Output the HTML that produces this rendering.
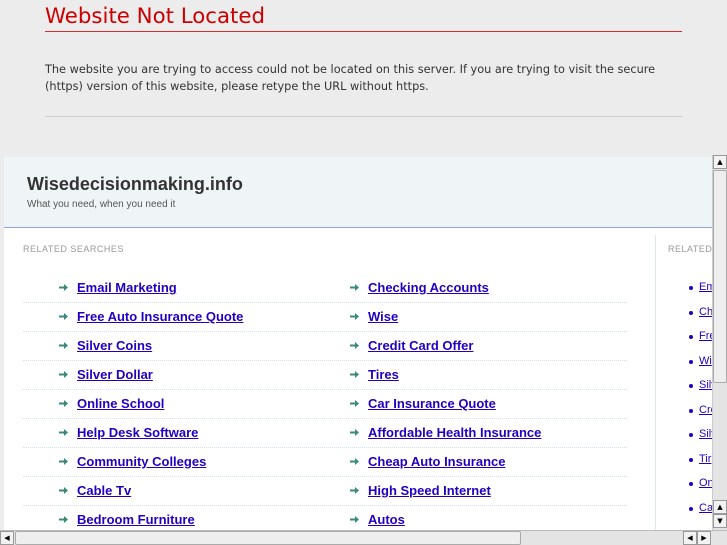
<!DOCTYPE html>
<html><head><meta charset="utf-8"><style>
*{margin:0;padding:0;box-sizing:border-box}
body{width:727px;height:545px;overflow:hidden;background:#ececec;position:relative;font-family:"DejaVu Sans",sans-serif}
.h1{position:absolute;left:45px;top:4px;font-size:21.3px;color:#c00;font-weight:normal}
.rl{position:absolute;left:45px;top:31px;width:637px;height:1px;background:#d03030}
.p{position:absolute;left:45px;top:61px;font-size:11.3px;line-height:17px;color:#333;width:640px}
.gl{position:absolute;left:45px;top:116px;width:637px;height:1px;background:#ccc}
.frame{position:absolute;left:4px;top:157px;width:708px;height:373px;background:#fff;overflow:hidden;font-family:"Liberation Sans",sans-serif}
.hd{position:absolute;left:0;top:0;width:708px;height:71px;background:#eff5f7;border-bottom:1px solid #8ea6d8}
.t{position:absolute;left:23px;top:17px;font-size:18px;font-weight:bold;color:#333}
.st{position:absolute;left:23px;top:42px;font-size:10px;color:#555}
.rs{position:absolute;top:87px;font-size:9px;color:#999;letter-spacing:.5px}
.row{position:absolute;font-size:13px;font-weight:bold;color:#2200c1;text-decoration:underline}
.ar{position:absolute;width:9px;height:7px}
.ar svg{display:block}
.dl{position:absolute;left:19px;width:604px;border-top:1px dotted #cfe0ee}
.vl{position:absolute;left:651px;top:78px;width:1px;height:300px;background:#dde4f2}
.sl{position:absolute;font-size:11px;color:#2200c1;text-decoration:underline}
.bul{position:absolute;width:4px;height:4px;border-radius:2px;background:#2200c1}
.vs{position:absolute;left:712px;top:155px;width:15px;height:375px;background:#e4e4e4;border-left:1px solid #ccc}
.hs{position:absolute;left:0;top:530px;width:727px;height:15px;background:#e4e4e4;border-top:1px solid #bbb}
.btn{position:absolute;width:14px;height:14px;background:#f2f2f2;border:1px solid #999;font-size:7px;line-height:12px;text-align:center;color:#000}
</style></head><body>
<div class="h1">Website Not Located</div>
<div class="rl"></div>
<div class="p">The website you are trying to access could not be located on this server. If you are trying to visit the secure (https) version of this website, please retype the URL without https.</div>
<div class="gl"></div>
<div class="frame">
<div class="hd"><div class="t">Wisedecisionmaking.info</div><div class="st">What you need, when you need it</div></div>
<div class="rs" style="left:19px">RELATED SEARCHES</div>
<div class="rs" style="left:664px">RELATED</div>
<div class="vl"></div>
<div id="rows"></div>
</div>
<div class="vs">
<div class="btn" style="left:0;top:0">▲</div>
<div style="position:absolute;left:0;top:15px;width:14px;height:213px;background:#eee;border:1px solid #aaa;border-radius:2px"></div>
<div class="btn" style="left:0;top:345px">▲</div>
<div class="btn" style="left:0;top:359px">▼</div>
</div>
<div class="hs">
<div class="btn" style="left:0;top:0">◀</div>
<div style="position:absolute;left:15px;top:0;width:506px;height:14px;background:#eee;border:1px solid #aaa;border-radius:2px"></div>
<div class="btn" style="left:683px;top:0">◀</div>
<div class="btn" style="left:697px;top:0">▶</div>
</div>
<script>
var L=["Email Marketing","Free Auto Insurance Quote","Silver Coins","Silver Dollar","Online School","Help Desk Software","Community Colleges","Cable Tv","Bedroom Furniture"];
var R=["Checking Accounts","Wise","Credit Card Offer","Tires","Car Insurance Quote","Affordable Health Insurance","Cheap Auto Insurance","High Speed Internet","Autos"];
var S=["Em","Ch","Fre","Wi","Silv","Cre","Silv","Tir","On","Ca"];
var A='<svg viewBox="0 0 9 7" width="9" height="7"><path d="M0 2.5H5V0L9 3.5 5 7V4.5H0Z" fill="#3a8a7a"/></svg>';
var h="";
for(var i=0;i<9;i++){var y=123+i*29;
h+='<div class="ar" style="left:55px;top:'+(y+4)+'px">'+A+'</div><div class="row" style="left:73px;top:'+y+'px">'+L[i]+'</div>';
h+='<div class="ar" style="left:346px;top:'+(y+4)+'px">'+A+'</div><div class="row" style="left:364px;top:'+y+'px">'+R[i]+'</div>';
h+='<div class="dl" style="top:'+(y+22)+'px"></div>';}
for(var j=0;j<10;j++){var y2=124+j*24.5;h+='<div class="bul" style="left:685px;top:'+(y2+5)+'px"></div><div class="sl" style="left:695px;top:'+y2+'px">'+S[j]+'</div>';}
document.getElementById("rows").innerHTML=h;
</script>
</body></html>
